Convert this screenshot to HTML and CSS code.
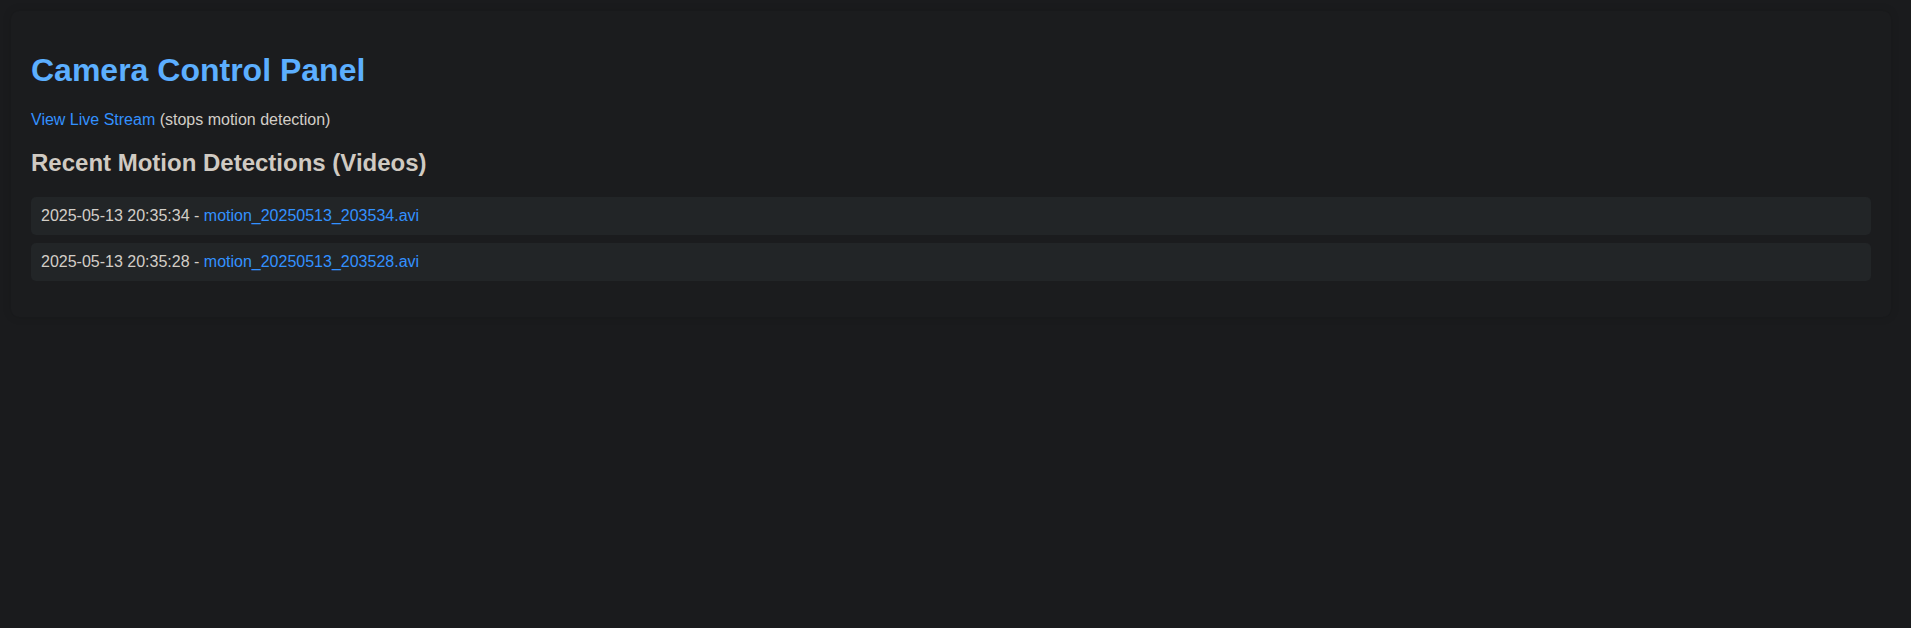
FILE: index.html
```html
<!DOCTYPE html>
<html lang="en">
<head>
<meta charset="utf-8">
<title>Camera Control Panel</title>
<link rel="stylesheet" href="styles.css">
</head>
<body>
<div class="container">
  <h1 class="title">Camera Control Panel</h1>
  <p class="stream"><a class="link" href="#">View Live Stream</a> (stops motion detection)</p>
  <h2 class="subtitle">Recent Motion Detections (Videos)</h2>
  <ul class="list">
    <li class="item">2025-05-13 20:35:34 - <a class="link" href="#">motion_20250513_203534.avi</a></li>
    <li class="item">2025-05-13 20:35:28 - <a class="link" href="#">motion_20250513_203528.avi</a></li>
  </ul>
</div>
</body>
</html>
```

FILE: styles.css
```css
html, body {
  background: #1a1b1d;
}
body {
  margin: 0;
  padding: 11px 20px 11px 11px;
  font-family: "Liberation Sans", Arial, sans-serif;
  color: #d3cec7;
}
.container {
  background: #1b1c1e;
  padding: 20px;
  border-radius: 8px;
  box-shadow: 0 0 10px rgba(0, 0, 0, 0.12);
}
.title {
  margin: 0.67em 0;
  font-size: 32px;
  font-weight: bold;
  color: #5cafff;
}
.stream {
  margin: 16px 0;
  font-size: 16px;
}
.link {
  color: #3391ff;
  text-decoration: none;
}
.subtitle {
  margin: 0.83em 0;
  font-size: 24px;
  font-weight: bold;
  color: #d0cac2;
}
.list {
  list-style: none;
  margin: 16px 0;
  padding: 0;
}
.item {
  background: #222527;
  padding: 10px;
  margin-bottom: 8px;
  border-radius: 5px;
  font-size: 16px;
}
```
